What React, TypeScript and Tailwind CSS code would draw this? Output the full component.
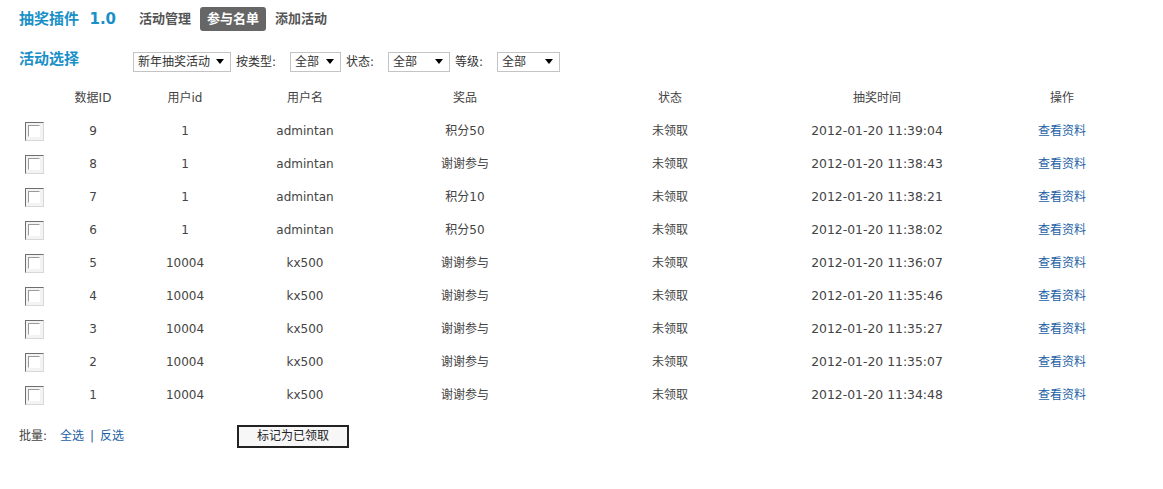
const rows = [
  { id: 9, uid: "1", name: "admintan", prize: "积分50", time: "2012-01-20 11:39:04" },
  { id: 8, uid: "1", name: "admintan", prize: "谢谢参与", time: "2012-01-20 11:38:43" },
  { id: 7, uid: "1", name: "admintan", prize: "积分10", time: "2012-01-20 11:38:21" },
  { id: 6, uid: "1", name: "admintan", prize: "积分50", time: "2012-01-20 11:38:02" },
  { id: 5, uid: "10004", name: "kx500", prize: "谢谢参与", time: "2012-01-20 11:36:07" },
  { id: 4, uid: "10004", name: "kx500", prize: "谢谢参与", time: "2012-01-20 11:35:46" },
  { id: 3, uid: "10004", name: "kx500", prize: "谢谢参与", time: "2012-01-20 11:35:27" },
  { id: 2, uid: "10004", name: "kx500", prize: "谢谢参与", time: "2012-01-20 11:35:07" },
  { id: 1, uid: "10004", name: "kx500", prize: "谢谢参与", time: "2012-01-20 11:34:48" },
];

const font = "font-['DejaVu_Sans','Noto_Sans_CJK_SC',sans-serif]";
const cols = "grid grid-cols-[30px_88px_96px_144px_176px_234px_180px_190px] items-center text-center";

function Select({ label, width }: { label: string; width: string }) {
  return (
    <div className={`flex h-[20px] items-center justify-between border border-[#c4c4c4] bg-white pl-[4px] pr-[6px] ${width}`}>
      <span className="leading-none">{label}</span>
      <span className="h-0 w-0 border-x-[4px] border-t-[5px] border-x-transparent border-t-black" />
    </div>
  );
}

function Checkbox() {
  return (
    <div className="mx-auto flex h-[19px] w-[19px] items-start justify-start border border-t-[#6f6f6f] border-l-[#6f6f6f] border-b-[#d8d8d8] border-r-[#d8d8d8] bg-[#f3f3f3] p-[2px]">
      <div className="h-[12px] w-[12px] border border-t-[#9a9a9a] border-l-[#9a9a9a] border-b-white border-r-white bg-white" />
    </div>
  );
}

export default function App() {
  return (
    <div className={`h-[489px] w-[1163px] bg-white text-[12px] text-[#444] ${font}`}>
      <div className="flex items-center pl-[19px] pt-[7px]">
        <span className="text-[15px] font-bold text-[#1a90c8]">抽奖插件&nbsp; 1.0</span>
        <nav className="ml-[21px] flex items-center gap-[2px] text-[13px] font-bold text-[#555]">
          <span className="px-[2px] py-[2px]">活动管理</span>
          <span className="ml-[5px] rounded-[3px] bg-[#666] px-[7px] py-[2px] text-white">参与名单</span>
          <span className="ml-[5px] px-[2px] py-[2px]">添加活动</span>
        </nav>
      </div>

      <div className="mt-[17px] flex items-start pl-[19px]">
        <span className="w-[114px] text-[15px] font-bold text-[#1a90c8]">活动选择</span>
        <div className="mt-[4px] flex items-center gap-[5px] text-[#333]">
          <Select label="新年抽奖活动" width="w-[98px]" />
          <span className="w-[49px]">按类型:</span>
          <Select label="全部" width="w-[51px]" />
          <span className="w-[37px]">状态:</span>
          <Select label="全部" width="w-[62px]" />
          <span className="w-[37px]">等级:</span>
          <Select label="全部" width="w-[63px]" />
        </div>
      </div>

      <div className="ml-[19px] mt-[10px]">
        <div className={`${cols} h-[33px] text-[#444]`}>
          <span />
          <span>数据ID</span>
          <span>用户id</span>
          <span>用户名</span>
          <span>奖品</span>
          <span>状态</span>
          <span>抽奖时间</span>
          <span>操作</span>
        </div>
        {rows.map((r) => (
          <div key={r.id} className={`${cols} h-[33px]`}>
            <Checkbox />
            <span>{r.id}</span>
            <span>{r.uid}</span>
            <span>{r.name}</span>
            <span>{r.prize}</span>
            <span>未领取</span>
            <span className="text-[12.4px]">{r.time}</span>
            <span className="text-[#1d5fa5]">查看资料</span>
          </div>
        ))}
      </div>

      <div className="ml-[19px] mt-[13px] flex items-center">
        <span className="w-[41px]">批量:</span>
        <span className="text-[#1d5fa5]">全选</span>
        <span className="mx-[6px] text-[#1d5fa5]">|</span>
        <span className="text-[#1d5fa5]">反选</span>
        <button className="ml-[113px] h-[23px] w-[112px] border-2 border-[#222] bg-[#f7f7f7] text-[12px] text-[#222]">
          标记为已领取
        </button>
      </div>
    </div>
  );
}
